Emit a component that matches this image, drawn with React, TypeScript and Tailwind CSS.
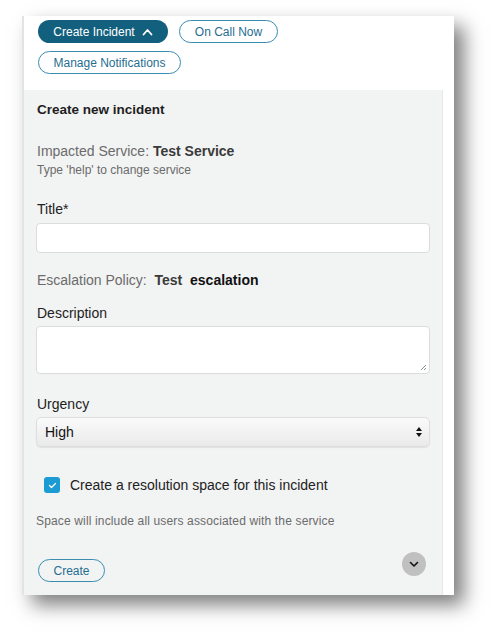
import React from "react";

const font = { fontFamily: '"Liberation Sans", Arial, sans-serif' };

function ChevronUp() {
  return (
    <svg width="11" height="8" viewBox="0 0 11 8" fill="none" className="ml-[7px]">
      <path d="M1.5 6.5 L5.5 2 L9.5 6.5" stroke="white" strokeWidth="1.8" strokeLinecap="round" strokeLinejoin="round" />
    </svg>
  );
}

export default function App() {
  return (
    <div className="min-h-[642px] w-[500px] bg-white pl-[22px] pt-[16px]" style={font}>
      <div className="w-[432px] h-[579px] flex flex-col bg-white border-l-2 border-[#e2e4e4] shadow-[10px_10px_18px_rgba(0,0,0,0.5)]">
        <div className="h-[74px] pl-[14px] pt-[4px] flex flex-col gap-[8px]">
          <div className="flex gap-[11px]">
            <button className="w-[130px] h-[23px] rounded-full bg-[#135f7e] text-white text-[12px] flex items-center justify-center">
              Create Incident
              <ChevronUp />
            </button>
            <button className="w-[99px] h-[23px] rounded-full border-[1.5px] border-[#3a8db1] text-[#1f6e91] text-[12px] flex items-center justify-center">
              On Call Now
            </button>
          </div>
          <button className="w-[143px] h-[23px] rounded-full border-[1.5px] border-[#3a8db1] text-[#1f6e91] text-[12px] flex items-center justify-center">
            Manage Notifications
          </button>
        </div>
        <div className="flex-1 flex">
          <div className="w-[419px] bg-[#f2f3f3] border-r border-[#e6e8e8] px-3 flex flex-col">
            <div className="mt-[10px] h-[20px] leading-[20px] text-[13.5px] font-bold text-[#1e1e1e] pl-px">
              Create new incident
            </div>
            <div className="mt-[21px] h-[20px] leading-[20px] text-[14px] text-[#6b6b6b] pl-px">
              Impacted Service: <span className="font-semibold text-[#3a3a3a]">Test Service</span>
            </div>
            <div className="mt-[1px] h-[16px] leading-[16px] text-[12px] text-[#6b6b6b] pl-px">
              Type 'help' to change service
            </div>
            <div className="mt-[22px] h-[18px] leading-[18px] text-[14px] text-[#222] pl-px">Title*</div>
            <div className="mt-[5px] h-[30px] rounded-[4px] border border-[#dcdcdc] bg-white" />
            <div className="mt-[17px] h-[20px] leading-[20px] text-[14px] text-[#6b6b6b] pl-px">
              Escalation Policy:&nbsp; <span className="font-semibold text-[#3a3a3a]">Test</span>&nbsp;{" "}
              <span className="font-bold text-[#111]">escalation</span>
            </div>
            <div className="mt-[14px] h-[18px] leading-[18px] text-[14px] text-[#222] pl-px">Description</div>
            <div className="mt-[4px] h-[48px] rounded-[4px] border border-[#dcdcdc] bg-white relative">
              <svg width="7" height="7" viewBox="0 0 7 7" className="absolute right-[2px] bottom-[2px]">
                <path d="M1 6 L6 1 M4 6 L6 4" stroke="#777" strokeWidth="0.8" />
              </svg>
            </div>
            <div className="mt-[21px] h-[18px] leading-[18px] text-[14px] text-[#222] pl-px">Urgency</div>
            <div className="mt-[4px] h-[30px] rounded-[5px] border border-[#dedede] bg-gradient-to-b from-[#fafafa] to-[#eaeaea] shadow-[0_1px_1px_rgba(0,0,0,0.08)] flex items-center justify-between pl-[8px] pr-[6px]">
              <span className="text-[14px] text-[#111]">High</span>
              <svg width="8" height="12" viewBox="0 0 8 12">
                <path d="M4 1 L7 5 L1 5 Z" fill="#111" />
                <path d="M4 11 L7 7 L1 7 Z" fill="#111" />
              </svg>
            </div>
            <div className="mt-[28px] h-[20px] flex items-center pl-[8px]">
              <div className="w-[16px] h-[16px] rounded-[3px] bg-[#1b9bd3] flex items-center justify-center">
                <svg width="9" height="7" viewBox="0 0 9 7">
                  <path d="M1.5 3.5 L3.5 5.5 L7.5 1.5" stroke="white" strokeWidth="1.3" fill="none" strokeLinecap="round" strokeLinejoin="round" />
                </svg>
              </div>
              <span className="ml-[10px] text-[14px] text-[#222]">Create a resolution space for this incident</span>
            </div>
            <div className="mt-[18px] h-[16px] leading-[16px] text-[12px] tracking-[0.15px] text-[#6b6b6b]">
              Space will include all users associated with the service
            </div>
            <div className="mt-[23px] flex justify-between items-start">
              <button className="mt-[7px] ml-[2px] w-[67px] h-[23px] rounded-full border-[1.5px] border-[#3a8db1] text-[#1f6e91] text-[12px] flex items-center justify-center">
                Create
              </button>
              <div className="mr-[4px] w-[24px] h-[24px] rounded-full bg-[#c0c0c0] flex items-center justify-center">
                <svg width="10" height="7" viewBox="0 0 10 7">
                  <path d="M1.5 1.5 L5 5 L8.5 1.5" stroke="#111" strokeWidth="1.6" fill="none" strokeLinecap="round" strokeLinejoin="round" />
                </svg>
              </div>
            </div>
          </div>
          <div className="flex-1 bg-white" />
        </div>
      </div>
    </div>
  );
}
